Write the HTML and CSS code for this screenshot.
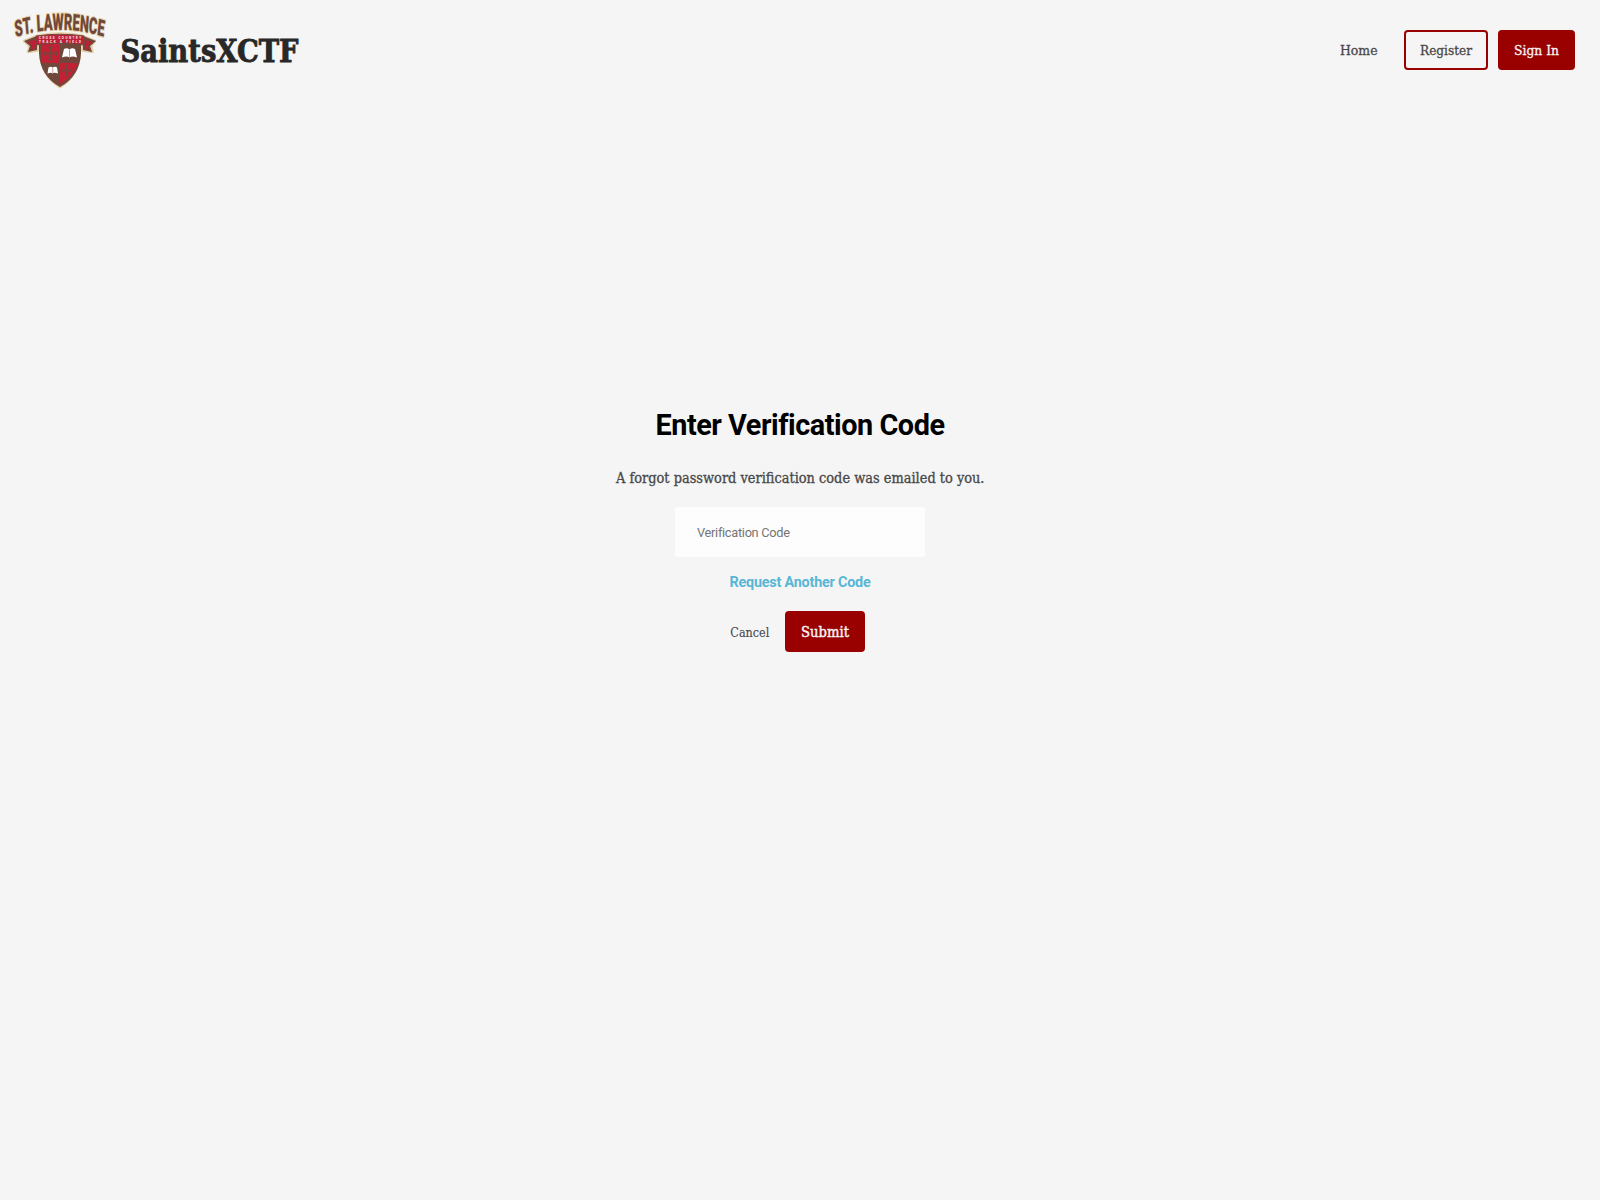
FILE: index.html
```html
<!DOCTYPE html>
<html lang="en">
<head>
<meta charset="utf-8">
<title>SaintsXCTF</title>
<link rel="stylesheet" href="styles.css">
</head>
<body>
<header class="nav">
  <div class="brand">
    <svg class="logo" width="120" height="100" viewBox="0 0 120 100">
      <defs><path id="arch" d="M26 37.2Q99 22.5 175 37.2"/></defs>
      <g stroke="#e5cea5" stroke-width="2.6" stroke-linejoin="round" fill="#e5cea5">
        <path d="M24 41L38 35.5Q60 31.5 82 35.5L95 41L91 46L92.500 52L80 50Q79 76 60 87Q41 76 40 50L28 52L29.500 46Z"/>
      </g>
      <path d="M24 41L37 36V50L28 52L30 46ZM96 41L83 36V50L92 52L90 46Z" fill="#70483b"/>
      <path d="M27.500 42L35 40V48.500L30.500 50L32 45.500ZM92.500 42L85 40V48.500L89.500 50L88 45.500Z" fill="#bd2036"/>
      <path d="M39 43H81V53Q80 76 60 87Q40 76 39 53Z" fill="#70483b"/>
      <path d="M41 44H60V63H42.500Q41 59 41 53ZM60 63H78Q73 77 60 84.500Z" fill="#c12035"/>
      <path d="M36 36Q60 32.500 84 36V45Q60 41.500 36 45Z" fill="#bd2036" stroke="#70483b"/>
      <g stroke="#70483b" stroke-width="1.5" fill="none">
        <path d="M50.500 47V60M44 53.500H57M48.500 47.500H52.500M48.500 59.500H52.500M44.500 51.500V55.500M56.500 51.500V55.500"/>
        <path d="M66.500 65V76M61 70.500H72M65 65.500H68M65 75.500H68M61.500 69V72M71.500 69V72" stroke-width="1.3"/>
      </g>
      <path d="M49 52H52V55H49Z" fill="#70483b"/>
      <path d="M64 49Q67 47.500 69.500 49.500Q72 47.500 75 49L77 57.500Q72 55.500 69.500 57.500Q67 55.500 62 57.500ZM48.500 67.500Q51 66 52.500 67.500Q55 66 57 67.500L58 73.500Q54 72 52.500 73.500Q51 72 47.500 73.500Z" fill="#fff"/>
      <path d="M69.500 49.500V57M52.800 67.500V73" stroke="#a88c80" stroke-width=".8"/>
      <g class="ribbon-text">
        <text x="39" y="39" textLength="42" lengthAdjust="spacing">CROSS COUNTRY</text>
        <text x="39" y="42.600" textLength="42" lengthAdjust="spacing">TRACK &amp; FIELD</text>
      </g>
      <g transform="scale(.6 1)"><text class="arch-text"><textPath href="#arch" textLength="148" lengthAdjust="spacingAndGlyphs">ST. LAWRENCE</textPath></text></g>
    </svg>
    <svg class="slab wordmark" width="180" height="44"><text x="0.500" y="32" textLength="178" lengthAdjust="spacingAndGlyphs">SaintsXCTF</text></svg>
  </div>
  <nav class="links">
    <a class="link"><svg class="slab small" width="38" height="20"><text x="0" y="15" textLength="37.500" lengthAdjust="spacingAndGlyphs">Home</text></svg></a>
    <a class="button outline"><svg class="slab small" width="52" height="20"><text x="0" y="15" textLength="52" lengthAdjust="spacingAndGlyphs">Register</text></svg></a>
    <a class="button filled"><svg class="slab small" width="45" height="20"><text x="0" y="15" textLength="45" lengthAdjust="spacingAndGlyphs">Sign In</text></svg></a>
  </nav>
</header>
<main class="panel">
  <h1 class="title">Enter Verification Code</h1>
  <svg class="slab message" width="369" height="24"><text x="0" y="17" textLength="368.500" lengthAdjust="spacingAndGlyphs">A forgot password verification code was emailed to you.</text></svg>
  <input class="code" type="text" placeholder="Verification Code">
  <a class="resend">Request Another Code</a>
  <div class="actions">
    <a class="cancel"><svg class="slab tiny" width="39" height="20"><text x="-0.700" y="15" textLength="39" lengthAdjust="spacingAndGlyphs">Cancel</text></svg></a>
    <a class="submit"><svg class="slab medium" width="48" height="20"><text x="0" y="15" textLength="48" lengthAdjust="spacingAndGlyphs">Submit</text></svg></a>
  </div>
</main>
</body>
</html>
```
FILE: styles.css
```css
* { box-sizing: border-box; }
body { margin: 0; min-height: 1200px; background: #f5f5f5; font-family: Roboto, sans-serif; }
svg { display: block; flex: none; }
.nav { height: 100px; display: flex; align-items: center; justify-content: space-between; padding-right: 25px; }
.brand { display: flex; align-items: center; }
.slab { font-family: "Roboto Slab", "DejaVu Serif Condensed", "DejaVu Serif", serif; font-stretch: condensed; overflow: visible; fill: #484848; stroke: #484848; stroke-width: .3px; }
.wordmark { margin-top: 3px; font-size: 32px; font-weight: 700; fill: #282828; stroke: #282828; stroke-width: .8px; }
.small { font-size: 13.5px; }
.message { font-size: 14.4px; margin-top: 24px; }
.tiny { font-size: 12.5px; stroke-width: .1px; }
.medium { font-size: 14.5px; stroke-width: .4px; }
.arch-text { font-family: Roboto, sans-serif; font-weight: 900; font-size: 23px; fill: #70483b; stroke: #e5cea5; stroke-width: 2px; paint-order: stroke; }
.ribbon-text { font-family: Roboto, sans-serif; font-weight: 700; font-size: 3px; fill: #fbeeee; }
.links { display: flex; align-items: center; }
.link { margin-right: 26px; }
.button { height: 40px; display: flex; align-items: center; justify-content: center; border-radius: 4px; }
.outline { width: 84px; border: 2px solid #900; margin-right: 10px; }
.filled { width: 77px; background: #900; }
.filled .slab, .submit .slab { fill: #f5f5f5; stroke: #f5f5f5; }
.panel { display: flex; flex-direction: column; align-items: center; padding-top: 308px; }
.title { margin: 0; font-size: 28.8px; line-height: 34px; font-weight: 700; letter-spacing: -.45px; color: #000; white-space: nowrap; }
.code { width: 250px; height: 50px; margin-top: 17px; padding: 1px 22px 0; border: 0; border-radius: 4px; background: #fdfdfd; font: 12.8px Roboto, sans-serif; letter-spacing: -.3px; }
.code::placeholder { color: #757575; }
.resend { margin-top: 16px; font-size: 14.4px; line-height: 20px; font-weight: 700; letter-spacing: -.22px; color: #58b7d5; }
.actions { display: flex; align-items: center; margin-top: 18px; margin-right: 4px; }
.cancel { margin-right: 15px; }
.submit { width: 80px; height: 41px; display: flex; align-items: center; justify-content: center; border-radius: 4px; background: #900; }
```
